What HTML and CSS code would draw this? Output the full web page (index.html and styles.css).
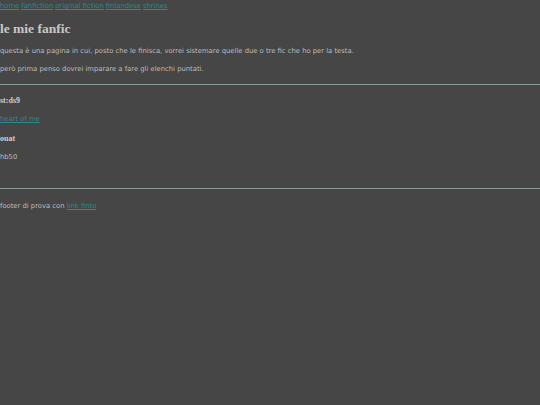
FILE: index.html
```html
<!DOCTYPE html>
<html lang="it">
<head>
<meta charset="utf-8">
<title>le mie fanfic</title>
<link rel="stylesheet" href="styles.css">
</head>
<body>
<nav class="nav">
  <a href="#">home</a>
  <a href="#">fanfiction</a>
  <a href="#">original fiction</a>
  <a href="#">finlandese</a>
  <a href="#">shrines</a>
</nav>
<main class="main">
  <h1 class="title">le mie fanfic</h1>
  <p class="text">questa è una pagina in cui, posto che le finisca, vorrei sistemare quelle due o tre fic che ho per la testa.</p>
  <p class="text">però prima penso dovrei imparare a fare gli elenchi puntati.</p>
  <hr class="rule">
  <section class="list">
    <h4 class="fandom">st:ds9</h4>
    <p class="item"><a href="#">heart of me</a></p>
    <h4 class="fandom">ouat</h4>
    <p class="item">hb50</p>
  </section>
  <hr class="rule rule-bottom">
  <footer class="footer">footer di prova con <a href="#">link finto</a></footer>
</main>
</body>
</html>
```
FILE: styles.css
```css
html, body {
  margin: 0;
  padding: 0;
  background: #464646;
  height: 100%;
}
body {
  color: #bdbdbd;
  font-family: "DejaVu Sans", Verdana, sans-serif;
  font-size: 6.8px;
}
a {
  color: #2b8a8a;
  text-decoration: underline;
}
.nav {
  display: flex;
  gap: 2px;
  padding-top: 2px;
  line-height: 8px;
}
.main {
  display: flex;
  flex-direction: column;
}
.title {
  font-family: "Liberation Serif", "Times New Roman", serif;
  font-weight: bold;
  font-size: 13.5px;
  line-height: 16px;
  margin: 11px 0 0 0;
  color: #c8c8c8;
}
.text {
  margin: 10px 0 0 0;
  line-height: 8px;
}
.rule {
  border: 0;
  border-top: 1px solid #8a9c9c;
  margin: 11px 0 0 0;
  height: 0;
}
.list {
  display: flex;
  flex-direction: column;
}
.fandom {
  font-family: "Liberation Serif", "Times New Roman", serif;
  font-weight: bold;
  font-size: 8px;
  line-height: 8px;
  margin: 12px 0 0 0;
  color: #cfcfcf;
}
.item {
  margin: 10px 0 0 0;
  line-height: 8px;
}
.rule-bottom {
  margin-top: 27px;
}
.footer {
  margin-top: 13px;
  line-height: 8px;
}
```
